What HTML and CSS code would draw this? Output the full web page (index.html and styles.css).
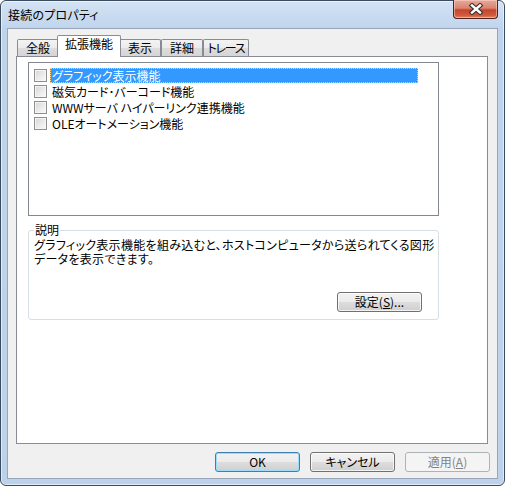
FILE: index.html
```html
<!DOCTYPE html>
<html lang="ja">
<head>
<meta charset="utf-8">
<title>接続のプロパティ</title>
<link rel="stylesheet" href="styles.css">
</head>
<body>
<div class="window">
  <div class="titlebar">
    <span class="title">接続のプロパティ</span>
    <div class="close">
      <svg width="16" height="12" viewBox="0 0 16 12">
        <path d="M4 2.5 L12 9.5 M12 2.5 L4 9.5" stroke="#3b2f2c" stroke-width="4.6" stroke-linecap="square"/>
        <path d="M4 2.5 L12 9.5 M12 2.5 L4 9.5" stroke="#ffffff" stroke-width="2.4" stroke-linecap="square"/>
      </svg>
    </div>
  </div>
  <div class="client">
    <div class="tabs">
      <div class="tab">全般</div>
      <div class="tab sel">拡張機能</div>
      <div class="tab">表示</div>
      <div class="tab">詳細</div>
      <div class="tab wide">トレース</div>
    </div>
    <div class="panel">
      <div class="listbox">
        <div class="item"><span class="cb"></span><span class="label selected">グラフィック表示機能</span></div>
        <div class="item"><span class="cb"></span><span class="label">磁気カード･バーコード機能</span></div>
        <div class="item"><span class="cb"></span><span class="label">WWWサーバ ハイパーリンク連携機能</span></div>
        <div class="item"><span class="cb"></span><span class="label">OLEオートメーション機能</span></div>
      </div>
      <fieldset class="group">
        <legend class="group-title">説明</legend>
        <p class="desc">グラフィック表示機能を組み込むと、ホストコンピュータから送られてくる図形<br>データを表示できます。</p>
        <div class="group-actions">
          <button class="btn">設定(<u>S</u>)...</button>
        </div>
      </fieldset>
    </div>
    <div class="buttons">
      <button class="btn default">OK</button>
      <button class="btn">キャンセル</button>
      <button class="btn disabled">適用(<u>A</u>)</button>
    </div>
  </div>
</div>
</body>
</html>
```
FILE: styles.css
```css
* { box-sizing: border-box; }
html, body { margin: 0; padding: 0; background: #ffffff; }
body {
  font-family: "Noto Sans CJK JP", "Liberation Sans", sans-serif;
  font-size: 12px;
  line-height: 14px;
  color: #000;
  font-feature-settings: "palt" 1;
}

.window {
  width: 505px;
  height: 486px;
  border: 1px solid #3b4b60;
  border-radius: 6px;
  background: linear-gradient(#d4e3f4 0, #bfd4ec 28px, #bcd2eb 100%);
  box-shadow: inset 0 0 0 1px rgba(255,255,255,0.55);
  padding: 0 6px 6px;
  display: flex;
  flex-direction: column;
}

.titlebar {
  height: 27px;
  display: flex;
  justify-content: space-between;
  align-items: flex-start;
}
.title { padding: 7px 0 0 1px; letter-spacing: 0.2px; }

.close {
  width: 45px;
  height: 19px;
  margin-top: -1px;
  border: 1px solid #4f241c;
  border-top: 0;
  border-radius: 0 0 4px 4px;
  background: linear-gradient(#e9a99b 0, #d88570 45%, #c7452a 55%, #d05a3e 85%, #e0896d 100%);
  box-shadow: inset 0 0 0 1px rgba(255,220,210,0.5);
  display: flex;
  align-items: center;
  justify-content: center;
}

.client {
  flex: 1;
  border: 1px solid #98a6b8;
  background: #f0f0f0;
  padding: 6px 7px 6px 8px;
  display: flex;
  flex-direction: column;
}

.tabs {
  height: 21px;
  display: flex;
  align-items: flex-end;
  padding-left: 1px;
}
.tab {
  width: 42px;
  height: 17px;
  border: 1px solid #898c95;
  border-bottom: 0;
  border-radius: 2px 2px 0 0;
  background: linear-gradient(#f3f3f3 0, #ebebeb 50%, #dddddd 51%, #d5d5d5 100%);
  text-align: center;
  line-height: 16px;
  white-space: nowrap;
}
.tab.wide { width: 46px; letter-spacing: -1.2px; }
.tab.sel {
  width: 64px;
  height: 22px;
  margin: 0 -2px -1px;
  background: #ffffff;
  position: relative;
  z-index: 1;
}

.panel {
  width: 472px;
  height: 388px;
  border: 1px solid #898c95;
  background: #ffffff;
  padding: 5px 0 0 11px;
}

.listbox {
  width: 411px;
  height: 154px;
  border: 1px solid #828790;
  background: #ffffff;
  padding: 4px 0 0 5px;
}
.item {
  height: 16px;
  display: flex;
  align-items: center;
}
.cb {
  width: 13px;
  height: 13px;
  flex: none;
  border: 1px solid #8e8f8f;
  background: linear-gradient(135deg, #d2d4d8 0, #e9e9e9 50%, #fbfbfb 100%);
  box-shadow: inset 0 0 0 1px #f5f5f5;
  margin-right: 3px;
}
.label {
  width: 368px;
  height: 15px;
  line-height: 15px;
  padding-left: 2px;
  white-space: nowrap;
}
.label.selected {
  background: #3399ff;
  color: #ffffff;
  outline: 1px dotted #ffcf8a;
  outline-offset: -1px;
}

.group {
  width: 411px;
  margin: 7px 0 0;
  border: 1px solid #d5dfe5;
  border-radius: 3px;
  padding: 1px 5px 7px 5px;
  min-inline-size: 0;
}
.group-title {
  padding: 0 1px;
  line-height: 14px;
}
.desc {
  margin: 0;
  line-height: 14px;
  letter-spacing: 0.3px;
  white-space: nowrap;
}
.group-actions {
  display: flex;
  justify-content: flex-end;
  margin-top: 26px;
  padding-right: 11px;
}

.btn {
  width: 85px;
  height: 20px;
  padding: 0;
  border: 1px solid #707070;
  border-radius: 3px;
  background: linear-gradient(#f2f2f2 0, #ebebeb 50%, #dddddd 51%, #cfcfcf 100%);
  box-shadow: inset 0 0 0 1px rgba(255,255,255,0.75);
  font: inherit;
  line-height: 16px;
  color: #000;
  font-feature-settings: "palt" 1;
}
.btn.default {
  border-color: #3c7fb1;
  box-shadow: inset 0 0 0 1px #9ddcfb;
}
.btn.disabled {
  border-color: #adb2b5;
  background: #f4f4f4;
  color: #838383;
  box-shadow: none;
}

.buttons {
  display: flex;
  justify-content: flex-end;
  gap: 10px;
  margin-top: 8px;
}
```
